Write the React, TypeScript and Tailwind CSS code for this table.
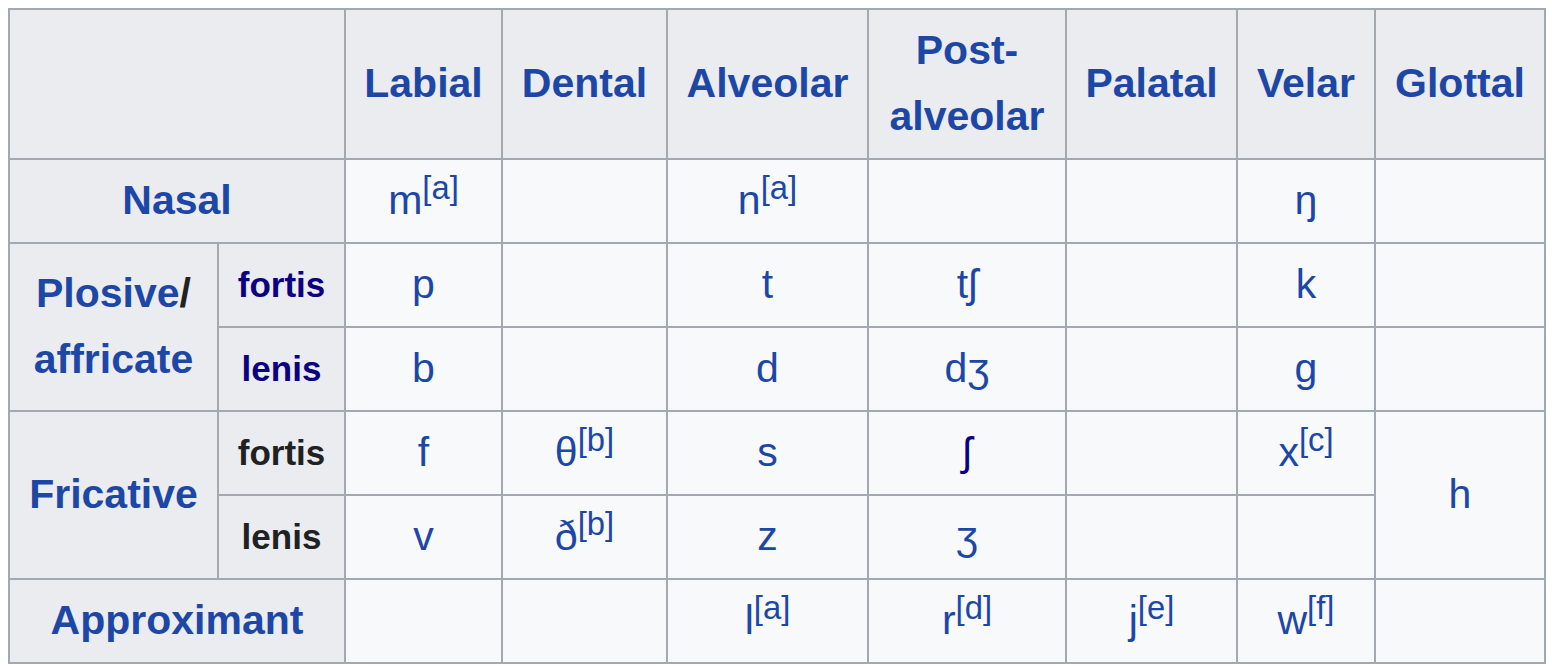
const blue = "text-[#1d47a6]";
const navy = "text-[#0b0080]";

function Sup({ n }: { n: string }) {
  return <sup className="relative top-[-0.45em] align-baseline text-[0.8em] leading-none">[{n}]</sup>;
}

function Th({ children, className = "", ...rest }: React.ThHTMLAttributes<HTMLTableCellElement>) {
  return (
    <th
      {...rest}
      className={`border-2 border-[#a2a9b1] bg-[#eaecf0] px-2 font-bold text-center align-middle leading-[1.6] ${className}`}
    >
      {children}
    </th>
  );
}

function Td({
  children,
  color = blue,
  ...rest
}: React.TdHTMLAttributes<HTMLTableCellElement> & { color?: string }) {
  return (
    <td
      {...rest}
      className={`border-2 border-[#a2a9b1] bg-[#f8f9fa] px-2 text-center align-middle leading-[1.6] ${color}`}
    >
      {children}
    </td>
  );
}

export default function App() {
  const cols = [209, 127, 157, 165, 201, 198, 171, 138, 170];
  return (
    <div className="bg-white min-h-screen pt-[8px] pl-[8px] font-['Liberation_Sans','DejaVu_Sans',sans-serif] text-[41px] text-[#202122]">
      <table className="border-collapse table-fixed w-[1538px]">
        <colgroup>
          {cols.map((w, i) => (
            <col key={i} style={{ width: w }} />
          ))}
        </colgroup>
        <tbody>
          <tr className="h-[150px]">
            <Th colSpan={2}></Th>
            <Th className={blue}>Labial</Th>
            <Th className={blue}>Dental</Th>
            <Th className={blue}>Alveolar</Th>
            <Th className={blue}>
              Post-
              <br />
              alveolar
            </Th>
            <Th className={blue}>Palatal</Th>
            <Th className={blue}>Velar</Th>
            <Th className={blue}>Glottal</Th>
          </tr>
          <tr className="h-[84px]">
            <Th colSpan={2} className={blue}>Nasal</Th>
            <Td>m<Sup n="a" /></Td>
            <Td></Td>
            <Td>n<Sup n="a" /></Td>
            <Td></Td>
            <Td></Td>
            <Td>ŋ</Td>
            <Td></Td>
          </tr>
          <tr className="h-[84px]">
            <Th rowSpan={2}>
              <span className={blue}>Plosive</span>/
              <br />
              <span className={blue}>affricate</span>
            </Th>
            <Th className={`${navy} text-[35px]`}>fortis</Th>
            <Td>p</Td>
            <Td></Td>
            <Td>t</Td>
            <Td>tʃ</Td>
            <Td></Td>
            <Td>k</Td>
            <Td></Td>
          </tr>
          <tr className="h-[84px]">
            <Th className={`${navy} text-[35px]`}>lenis</Th>
            <Td>b</Td>
            <Td></Td>
            <Td>d</Td>
            <Td>dʒ</Td>
            <Td></Td>
            <Td>g</Td>
            <Td></Td>
          </tr>
          <tr className="h-[84px]">
            <Th rowSpan={2} className={blue}>Fricative</Th>
            <Th className="text-[35px]">fortis</Th>
            <Td>f</Td>
            <Td>θ<Sup n="b" /></Td>
            <Td>s</Td>
            <Td color={navy}>ʃ</Td>
            <Td></Td>
            <Td>x<Sup n="c" /></Td>
            <Td rowSpan={2}>h</Td>
          </tr>
          <tr className="h-[84px]">
            <Th className="text-[35px]">lenis</Th>
            <Td>v</Td>
            <Td>ð<Sup n="b" /></Td>
            <Td>z</Td>
            <Td>ʒ</Td>
            <Td></Td>
            <Td></Td>
          </tr>
          <tr className="h-[84px]">
            <Th colSpan={2} className={blue}>Approximant</Th>
            <Td></Td>
            <Td></Td>
            <Td>l<Sup n="a" /></Td>
            <Td>r<Sup n="d" /></Td>
            <Td>j<Sup n="e" /></Td>
            <Td>w<Sup n="f" /></Td>
            <Td></Td>
          </tr>
        </tbody>
      </table>
    </div>
  );
}
